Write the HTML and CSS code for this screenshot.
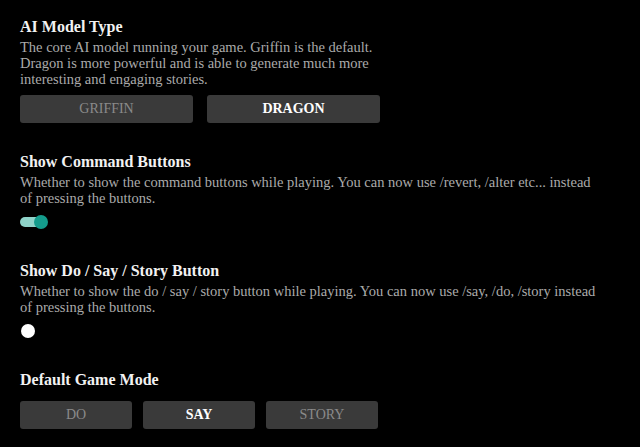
FILE: index.html
```html
<!DOCTYPE html>
<html>
<head>
<meta charset="utf-8">
<link rel="stylesheet" href="styles.css">
</head>
<body>
<main class="settings">
  <section class="setting narrow">
    <h2 class="title">AI Model Type</h2>
    <p class="desc">The core AI model running your game. Griffin is the default. Dragon is more powerful and is able to generate much more interesting and engaging stories.</p>
    <div class="choices two">
      <button class="choice">GRIFFIN</button>
      <button class="choice active">DRAGON</button>
    </div>
  </section>
  <section class="setting has-toggle">
    <h2 class="title">Show Command Buttons</h2>
    <p class="desc">Whether to show the command buttons while playing. You can now use /revert, /alter etc... instead of pressing the buttons.</p>
    <div class="toggle on"><span class="knob"></span></div>
  </section>
  <section class="setting has-toggle">
    <h2 class="title">Show Do / Say / Story Button</h2>
    <p class="desc">Whether to show the do / say / story button while playing. You can now use /say, /do, /story instead of pressing the buttons.</p>
    <div class="toggle off"><span class="knob"></span></div>
  </section>
  <section class="setting">
    <h2 class="title">Default Game Mode</h2>
    <div class="choices three">
      <button class="choice">DO</button>
      <button class="choice active">SAY</button>
      <button class="choice">STORY</button>
    </div>
  </section>
</main>
</body>
</html>
```

FILE: styles.css
```css
html, body {
  margin: 0;
  padding: 0;
  background: #000;
}
body {
  font-family: "Liberation Serif", "Times New Roman", serif;
  color: #fff;
}
.settings {
  display: flex;
  flex-direction: column;
  padding: 16px 20px 0 20px;
  width: 600px;
}
.setting {
  display: flex;
  flex-direction: column;
  margin-bottom: 28px;
}
.setting.has-toggle {
  margin-bottom: 31px;
}
.title {
  margin: 0;
  font-size: 16px;
  font-weight: bold;
  line-height: 22px;
  color: #f2f2f2;
}
.desc {
  margin: 1px 0 0 0;
  font-size: 14.5px;
  line-height: 16px;
  color: #ababab;
  max-width: 580px;
}
.narrow .desc {
  width: 360px;
}
.choices {
  display: flex;
  margin-top: 8px;
}
.title + .choices {
  margin-top: 10px;
}
.choices.two { gap: 14px; }
.choices.three { gap: 11px; }
.choice {
  height: 28px;
  border: none;
  border-radius: 3px;
  background: #3a3a3a;
  color: #8a8a8a;
  font-family: "Liberation Serif", "Times New Roman", serif;
  font-size: 14px;
  padding: 0;
}
.two .choice { width: 173px; }
.three .choice { width: 112px; }
.choice.active {
  color: #fff;
  font-weight: bold;
}
.toggle {
  margin-top: 9px;
  position: relative;
  width: 30px;
  height: 14px;
}
.toggle.on::before {
  content: "";
  position: absolute;
  left: 0;
  top: 2px;
  width: 24px;
  height: 10px;
  border-radius: 5px;
  background: #8fd3c9;
}
.knob {
  position: absolute;
  top: 0;
  width: 14px;
  height: 14px;
  border-radius: 50%;
}
.toggle.on .knob {
  left: 14px;
  background: #149c8c;
}
.toggle.off .knob {
  left: 1px;
  background: #fff;
}
```
